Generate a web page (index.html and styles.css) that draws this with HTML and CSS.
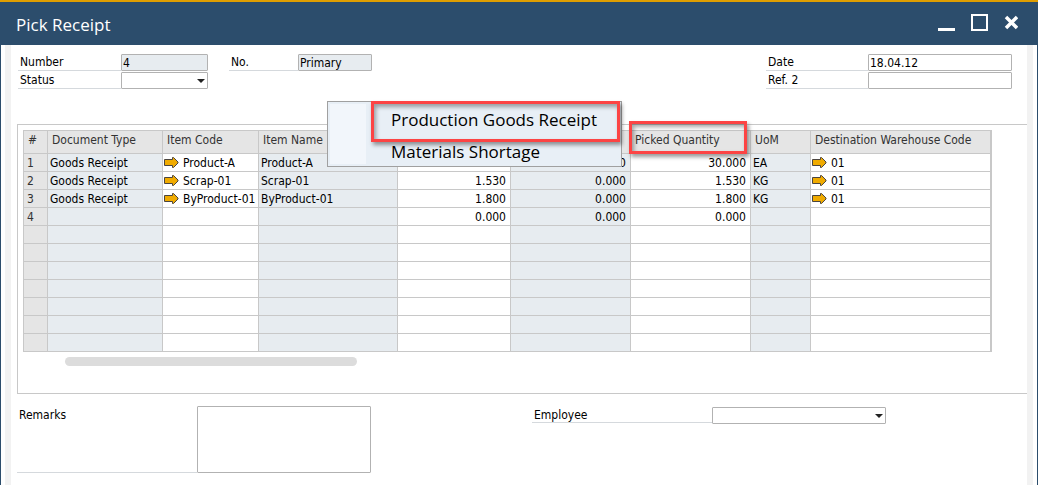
FILE: index.html
```
<!DOCTYPE html>
<html lang="en">
<head>
<meta charset="utf-8">
<title>Pick Receipt</title>
<link rel="stylesheet" href="styles.css">
</head>
<body>
<svg class="defs" aria-hidden="true">
  <symbol id="link-arrow" viewBox="0 0 15 11">
    <path d="M.5 2.500h8v-2h1l4.500 4.500v1l-4.500 4.500h-1v-2h-8z" fill="#f0ab00" stroke="#4a4540" stroke-width="1"/>
  </symbol>
</svg>
<div class="window">
  <header class="titlebar">
    <h1 class="title">Pick Receipt</h1>
    <div class="controls">
      <button class="control" aria-label="Minimize"><svg width="17" height="18"><path d="M0 15h17v3H0z" fill="#fff"/></svg></button>
      <button class="control" aria-label="Maximize"><svg width="17" height="18"><path d="M1 2h15v15H1z" fill="none" stroke="#fff" stroke-width="2"/><path d="M0 1h17v2H0z" fill="#fff"/></svg></button>
      <button class="control" aria-label="Close"><svg width="14" height="18"><path d="M2 4l11 11M13 4l-11 11" stroke="#fff" stroke-width="3.500"/></svg></button>
    </div>
  </header>
  <main class="content">
    <form class="head-form">
      <div class="fields">
        <div class="field"><label class="label" for="number">Number</label><input class="box short locked" id="number" value="4" readonly></div>
        <div class="field"><label class="label" for="status">Status</label><span class="dropdown short"><select class="box" id="status"><option></option></select></span></div>
      </div>
      <div class="fields">
        <div class="field"><label class="label narrow" for="series">No.</label><input class="box series locked" id="series" value="Primary" readonly></div>
      </div>
      <div class="fields far">
        <div class="field"><label class="label" for="date">Date</label><input class="box long" id="date" value="18.04.12"></div>
        <div class="field"><label class="label" for="ref">Ref. 2</label><input class="box long" id="ref"></div>
      </div>
    </form>
    <section class="panel">
      <table class="grid">
        <colgroup><col class="c-num"><col class="c-type"><col class="c-code"><col class="c-name"><col class="c-qty"><col class="c-open"><col class="c-open"><col class="c-uom"><col></colgroup>
        <thead>
          <tr><th>#</th><th>Document Type</th><th>Item Code</th><th>Item Name</th><th></th><th></th><th class="picked">Picked Quantity</th><th>UoM</th><th>Destination Warehouse Code</th></tr>
        </thead>
        <tbody>
          <tr><td class="num">1</td><td class="shade">Goods Receipt</td><td><span class="link"><svg class="arrow"><use href="#link-arrow"/></svg>Product-A</span></td><td class="shade">Product-A</td><td></td><td class="shade right">0.000</td><td class="right">30.000</td><td class="shade">EA</td><td><span class="link"><svg class="arrow"><use href="#link-arrow"/></svg>01</span></td></tr>
          <tr><td class="num">2</td><td class="shade">Goods Receipt</td><td><span class="link"><svg class="arrow"><use href="#link-arrow"/></svg>Scrap-01</span></td><td class="shade">Scrap-01</td><td class="right">1.530</td><td class="shade right">0.000</td><td class="right">1.530</td><td class="shade">KG</td><td><span class="link"><svg class="arrow"><use href="#link-arrow"/></svg>01</span></td></tr>
          <tr><td class="num">3</td><td class="shade">Goods Receipt</td><td><span class="link"><svg class="arrow"><use href="#link-arrow"/></svg>ByProduct-01</span></td><td class="shade">ByProduct-01</td><td class="right">1.800</td><td class="shade right">0.000</td><td class="right">1.800</td><td class="shade">KG</td><td><span class="link"><svg class="arrow"><use href="#link-arrow"/></svg>01</span></td></tr>
          <tr><td class="num">4</td><td class="shade"></td><td></td><td class="shade"></td><td class="right">0.000</td><td class="shade right">0.000</td><td class="right">0.000</td><td class="shade"></td><td></td></tr>
          <tr><td class="num"></td><td class="shade"></td><td></td><td class="shade"></td><td></td><td class="shade"></td><td></td><td class="shade"></td><td></td></tr>
          <tr><td class="num"></td><td class="shade"></td><td></td><td class="shade"></td><td></td><td class="shade"></td><td></td><td class="shade"></td><td></td></tr>
          <tr><td class="num"></td><td class="shade"></td><td></td><td class="shade"></td><td></td><td class="shade"></td><td></td><td class="shade"></td><td></td></tr>
          <tr><td class="num"></td><td class="shade"></td><td></td><td class="shade"></td><td></td><td class="shade"></td><td></td><td class="shade"></td><td></td></tr>
          <tr><td class="num"></td><td class="shade"></td><td></td><td class="shade"></td><td></td><td class="shade"></td><td></td><td class="shade"></td><td></td></tr>
          <tr><td class="num"></td><td class="shade"></td><td></td><td class="shade"></td><td></td><td class="shade"></td><td></td><td class="shade"></td><td></td></tr>
          <tr><td class="num"></td><td class="shade"></td><td></td><td class="shade"></td><td></td><td class="shade"></td><td></td><td class="shade"></td><td></td></tr>
        </tbody>
      </table>
      <div class="scroll-thumb"></div>
      <div class="menu" role="menu">
        <button class="menu-item marked" role="menuitem">Production Goods Receipt</button>
        <button class="menu-item" role="menuitem">Materials Shortage</button>
      </div>
    </section>
    <form class="foot-form">
      <div class="field remarks"><label class="label wide" for="remarks">Remarks</label><textarea class="box notes" id="remarks"></textarea></div>
      <div class="field employee"><label class="label wide" for="employee">Employee</label><span class="dropdown person"><select class="box" id="employee"><option></option></select></span></div>
    </form>
  </main>
</div>
</body>
</html>
```
FILE: styles.css
```
* { box-sizing: border-box; }
body {
  margin: 0;
  background: #fff;
  color: #000;
  font: 12px/16px "DejaVu Sans Condensed", "DejaVu Sans", sans-serif;
}
button, input, select, textarea { font: inherit; color: inherit; }
.defs { position: absolute; width: 0; height: 0; }
.window {
  display: flex;
  flex-direction: column;
  min-height: 100vh;
  border: 1px solid #2c4d6c;
  border-width: 0 1px;
}
.titlebar {
  display: flex;
  justify-content: space-between;
  align-items: center;
  height: 45px;
  margin: 0 -1px;
  padding: 0 20px 0 16px;
  border-top: 2px solid #e09e00;
  background: #2c4d6c;
}
.title {
  margin: 0;
  padding-top: 2px;
  color: #fff;
  font: 17px/24px "Open Sans", sans-serif;
}
.controls { display: flex; gap: 16px; padding-bottom: 3px; }
.control { padding: 0; border: 0; background: none; }
.control svg { display: block; }
.content {
  flex: 1;
  margin: 0 4px;
  padding-top: 9px;
  border: 6px solid #f2f2f2;
  border-width: 0 6px;
}
.head-form {
  display: flex;
  gap: 21px;
  min-height: 70px;
  padding: 0 15px 0 7px;
}
.far { margin-left: auto; }
.fields { display: flex; flex-direction: column; gap: 1px; }
.field { display: flex; }
.label {
  width: 103px;
  height: 17px;
  padding-left: 2px;
  border-bottom: 1px solid #d5d9dd;
}
.far .label { width: 102px; }
.narrow { width: 69px; }
.box {
  display: block;
  height: 17px;
  margin: 0;
  padding: 0 0 0 1px;
  border: 1px solid #b2b2b2;
  border-radius: 1px;
  background: #fff;
  outline: 0;
}
.locked { background: #e7ecf0; }
.short { width: 87px; }
.series { width: 74px; }
.long { width: 144px; }
.dropdown { position: relative; }
.dropdown .box { width: 100%; appearance: none; }
.dropdown::after {
  content: "";
  position: absolute;
  top: 7px;
  right: 3px;
  border: 4px solid transparent;
  border-top-color: #222;
  border-bottom: 0;
  pointer-events: none;
}
.panel {
  position: relative;
  height: 270px;
  margin-left: 6px;
  padding: 5px 35px 0 5px;
  border: 1px solid #c8c8c8;
  border-right: 0;
}
.grid {
  width: 100%;
  table-layout: fixed;
  border-collapse: separate;
  border-spacing: 0;
  border: 1px solid #c8c8c8;
  border-width: 1px 1px 0 1px;
}
.c-num { width: 24px; }
.c-type { width: 115px; }
.c-code { width: 96px; }
.c-name { width: 139px; }
.c-qty { width: 113px; }
.c-open { width: 120px; }
.c-uom { width: 60px; }
.grid th, .grid td {
  padding: 0 4px 0 2px;
  border: 1px solid #c8c8c8;
  border-width: 0 1px 1px 0;
  white-space: nowrap;
}
.grid th {
  height: 23px;
  padding: 0 0 4px 4px;
  background: #e5e5e5;
  color: #333;
  font-weight: normal;
  text-align: left;
}
.grid td { height: 18px; }
.grid .num { padding-left: 3px; background: #e5e5e5; color: #333; }
.grid .shade { background: #e7ecf0; }
.grid .right { text-align: right; }
.link { display: flex; align-items: center; gap: 4px; margin: 0 -4px 0 -1px; }
.arrow { flex: none; width: 15px; height: 11px; }
.picked { position: relative; }
.picked::after {
  content: "";
  position: absolute;
  inset: -10px 3px -1px -2px;
  border: 3px solid #fc4444;
  box-shadow: 2px 3px 4px rgba(0, 0, 0, .4), inset 2px 3px 4px rgba(0, 0, 0, .35);
}
.scroll-thumb {
  width: 292px;
  height: 9px;
  margin: 5px 0 0 42px;
  border-radius: 5px;
  background: #dcdcdc;
}
.menu {
  position: absolute;
  top: -24px;
  left: 309px;
  display: flex;
  flex-direction: column;
  width: 295px;
  padding: 0 1px 5px 43px;
  border: 1px solid #a0a0a0;
  background: linear-gradient(#f2f6fb, #f2f6fb) 2px 2px / 36px 60px no-repeat, #e8eff6;
}
.menu-item {
  height: 19px;
  padding: 0 0 0 20px;
  border: 0;
  background: none;
  font: 17px/19px "Open Sans", sans-serif;
  text-align: left;
  white-space: nowrap;
}
.menu-item.marked {
  height: 41px;
  margin-top: -1px;
  padding: 0 0 5px 17px;
  border: 3px solid #fc4444;
  box-shadow: 2px 3px 4px rgba(0, 0, 0, .4), inset 2px 3px 4px rgba(0, 0, 0, .35);
}
.foot-form { display: flex; align-items: flex-start; gap: 161px; padding: 12px 15px 12px 6px; }
.wide { width: 180px; }
.remarks .label { height: 67px; padding-top: 1px; }
.notes { width: 174px; height: 67px; resize: none; }
.person { width: 174px; }
.employee { padding-top: 1px; }
.employee .label { height: 16px; }
```
